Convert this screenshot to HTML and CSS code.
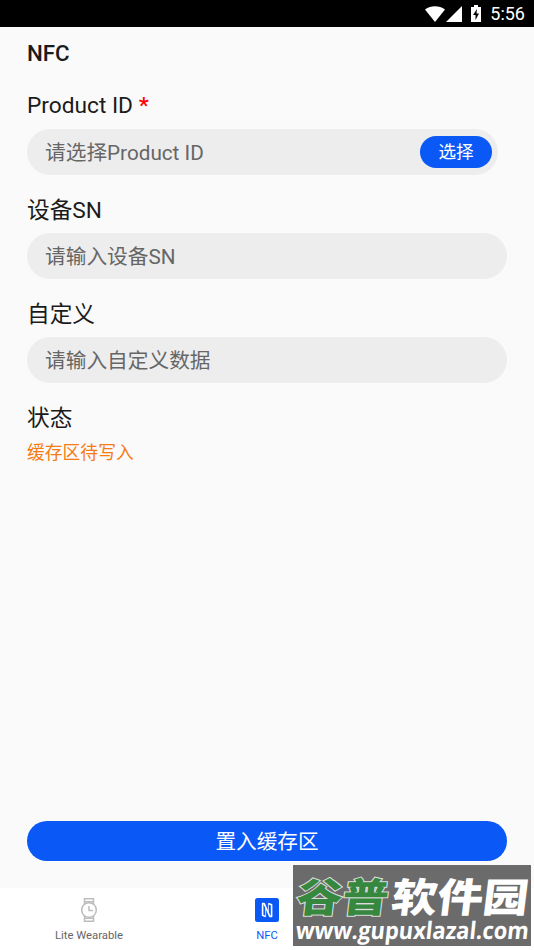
FILE: index.html
```html
<!DOCTYPE html>
<html lang="zh-CN">
<head>
<meta charset="utf-8">
<title>NFC</title>
<link rel="stylesheet" href="styles.css">
</head>
<body>
<div class="screen">
  <header class="status-bar">
    <svg class="wifi" viewBox="0 0 20 16"><path d="M0 3.5C6-.8 14-.8 20 3.5L10 16Z"/></svg>
    <svg class="signal" viewBox="0 0 16 16"><path d="M16 0V16H0Z"/></svg>
    <svg class="battery" viewBox="0 0 10 17"><path fill-rule="evenodd" d="M3 0H7V2H10V17H0V2H3ZM6 4L2 10H4.5V15L8 8.5H5.5Z"/></svg>
    <span class="clock">5:56</span>
  </header>
  <main class="content">
    <h1 class="title">NFC</h1>
    <label class="label">Product ID <span class="required">*</span></label>
    <div class="field field-select"><span>请选择Product ID</span><button class="choose">选择</button></div>
    <label class="label">设备SN</label>
    <div class="field">请输入设备SN</div>
    <label class="label">自定义</label>
    <div class="field">请输入自定义数据</div>
    <div class="label">状态</div>
    <div class="state">缓存区待写入</div>
    <button class="submit">置入缓存区</button>
  </main>
  <nav class="tabs">
    <div class="tab">
      <svg class="tab-icon" viewBox="0 0 24 24" fill="none" stroke="#bdbdbd" stroke-width="1.5"><circle cx="12" cy="12" r="7.3"/><path d="M7.5 6V.8H16.5V6M7.5 18V23.2H16.5V18M7.5 3.7H16.5M7.5 20.3H16.5M12 8V12.5H16"/></svg>
      <span>Lite Wearable</span>
    </div>
    <div class="tab active">
      <svg class="tab-icon" viewBox="0 0 24 24"><rect width="24" height="24" rx="2.5" fill="#0a59f7"/><path d="M10.6 18.6L7.6 17.2V5.6H9.2L14.8 18.4H16.6V6.8L13.4 5.4" fill="none" stroke="#fff" stroke-width="1.6" stroke-linejoin="round"/><path d="M10.6 10V18.6M13.4 5.4V14" stroke="#fff" stroke-width=".8"/></svg>
      <span>NFC</span>
    </div>
    <div class="tab"></div>
  </nav>
  <div class="watermark">
    <svg viewBox="0 0 238 81">
      <g class="brand" transform="translate(2 47) skewX(-7)">
        <text class="brand-green" x="0" y="0" textLength="92" lengthAdjust="spacingAndGlyphs">谷普</text>
        <text class="brand-white" x="95" y="0" textLength="137" lengthAdjust="spacingAndGlyphs">软件园</text>
      </g>
      <g transform="translate(2 74) skewX(-6)">
        <text class="site" x="0" y="0" textLength="233" lengthAdjust="spacingAndGlyphs">www.gupuxlazal.com</text>
      </g>
    </svg>
  </div>
</div>
</body>
</html>
```
FILE: styles.css
```css
* { box-sizing: border-box; }
body { margin: 0; font-family: Roboto, "Noto Sans CJK SC", sans-serif; color: #1b1b1b; }
button { border: 0; padding: 0; font-family: inherit; color: #fff; background: #0a59f7; }
.screen { position: relative; width: 534px; height: 950px; display: flex; flex-direction: column; background: #fafafa; overflow: hidden; }
.status-bar { height: 27px; flex: none; background: #000; display: flex; justify-content: flex-end; align-items: center; padding: 0 9px 0 0; color: #fff; }
.status-bar svg { fill: #fff; }
.wifi { width: 20px; height: 16px; margin-right: 1px; }
.signal { width: 16px; height: 16px; margin-right: 9px; }
.battery { width: 10px; height: 17px; margin-right: 9px; }
.clock { font-size: 18px; font-weight: 400; line-height: 27px; }
.content { flex: 1; display: flex; flex-direction: column; padding: 0 27px 27px; }
.title { margin: 0; height: 54px; line-height: 53px; font-size: 22.3px; font-weight: 500; }
.label { height: 58px; line-height: 51px; font-size: 22.7px; white-space: pre; }
.title + .label { height: 48px; line-height: 50px; }
.required { color: #f00; font-weight: 500; }
.field { height: 46px; border-radius: 23px; background: #ededed; padding: 0 18px; line-height: 49px; font-size: 20.7px; color: #666; }
.field-select { width: 471px; display: flex; align-items: center; justify-content: space-between; padding-right: 6px; }
.field-select span { height: 46px; }
.choose { width: 72px; height: 32px; border-radius: 16px; font-size: 17.6px; line-height: 33px; }
.field + .label { height: 58px; padding-top: 10px; }
.state { margin-top: -3px; line-height: 30px; font-size: 17.8px; color: #f57c14; }
.submit { margin-top: auto; height: 40px; flex: none; border-radius: 20px; font-size: 20.6px; line-height: 42px; }
.tabs { height: 62px; flex: none; background: #fff; display: grid; grid-template-columns: repeat(3, 1fr); }
.tab { display: flex; flex-direction: column; align-items: center; padding-top: 10px; font-size: 11.3px; line-height: 16px; color: #666; }
.tab-icon { width: 24px; height: 24px; margin-bottom: 6px; }
.active { color: #0a59f7; }
.watermark { position: absolute; left: 293px; top: 865px; width: 238px; height: 81px; background: #6b6b6b; }
.watermark svg { display: block; width: 238px; height: 81px; }
.brand { font-family: "Noto Sans CJK SC", sans-serif; font-size: 40px; font-weight: 900; paint-order: stroke; }
.brand-green { fill: #35883e; stroke: #ddd; stroke-width: 2px; }
.brand-white { fill: #fff; }
.site { font-family: "Open Sans", sans-serif; font-size: 24px; font-weight: 700; fill: #fff; }
```
